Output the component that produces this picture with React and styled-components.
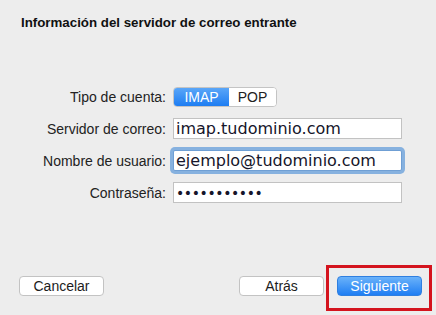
import React from 'react';
import styled, { createGlobalStyle } from 'styled-components';

const GlobalStyle = createGlobalStyle`
  html, body {
    margin: 0;
    padding: 0;
    background: #ededed;
  }
  body {
    font-family: "Liberation Sans", Arial, sans-serif;
    color: #1c1c1c;
  }
`;

const Window = styled('div')`
  width: 436px;
  height: 315px;
  background: #ededed;
  display: flex;
  flex-direction: column;
  box-sizing: border-box;
  padding: 16px 0 0 0;
`;

const Title = styled('div')`
  font-size: 13.3px;
  font-weight: bold;
  color: #111;
  padding-left: 21px;
  line-height: 14px;
`;

const Form = styled('div')`
  margin-top: 57px;
  display: grid;
  grid-template-columns: 166px 229px;
  column-gap: 7px;
  row-gap: 11px;
  align-items: center;
`;

const Label = styled('label')`
  text-align: right;
  font-size: 14px;
  color: #222;
`;

const Segmented = styled('div')`
  display: flex;
  width: 104px;
  height: 20px;
  border-radius: 4px;
  overflow: hidden;
  border: 1px solid #c4c4c4;
  box-sizing: border-box;
  background: #fff;
`;

const Segment = styled('div')`
  flex: ${(p) => (p.$active ? '0 0 55px' : '1')};
  display: flex;
  align-items: center;
  justify-content: center;
  font-size: 14px;
  color: ${(p) => (p.$active ? '#fff' : '#222')};
  background: ${(p) => (p.$active ? 'linear-gradient(#5aa6f8, #1e7df2)' : '#fff')};
`;

const Input = styled('div')`
  height: 21px;
  box-sizing: border-box;
  background: #fff;
  border: 1px solid #c2c2c2;
  padding-left: 2px;
  display: flex;
  align-items: center;
  font-family: "DejaVu Sans", "Liberation Sans", sans-serif;
  font-size: ${(p) => (p.$secret ? '14px' : '16px')};
  color: #15152a;
  letter-spacing: ${(p) => (p.$secret ? '-0.4px' : '0')};
  box-shadow: ${(p) => (p.$focused ? '0 0 0 3px #86b1df' : 'none')};
  border-color: ${(p) => (p.$focused ? '#6f9fd4' : '#c2c2c2')};
  border-radius: ${(p) => (p.$focused ? '2px' : '0')};
`;

const Footer = styled('div')`
  margin-top: auto;
  display: flex;
  align-items: flex-start;
  padding: 0 4px 4px 19px;
`;

const Button = styled('div')`
  width: 85px;
  height: 20px;
  box-sizing: border-box;
  border-radius: 4px;
  display: flex;
  align-items: center;
  justify-content: center;
  font-size: 14px;
  color: ${(p) => (p.$primary ? '#fff' : '#1c1c1c')};
  background: ${(p) => (p.$primary ? 'linear-gradient(#6ab2fa, #1f7ef3)' : '#fff')};
  border: 1px solid ${(p) => (p.$primary ? '#2f7fe0' : '#c3c3c3')};
  margin-top: 11px;
`;

const Spacer = styled('div')`
  flex: 1;
`;

const Highlight = styled('div')`
  border: 3px solid #d4141e;
  padding: 8px 7px 12px 8px;
  margin-left: 2px;
`;

const HighlightInner = styled(Button)`
  margin-top: 0;
`;

export default function App() {
  return (
    <Window>
      <GlobalStyle />
      <Title>Información del servidor de correo entrante</Title>
      <Form>
        <Label>Tipo de cuenta:</Label>
        <Segmented>
          <Segment $active>IMAP</Segment>
          <Segment>POP</Segment>
        </Segmented>
        <Label>Servidor de correo:</Label>
        <Input>imap.tudominio.com</Input>
        <Label>Nombre de usuario:</Label>
        <Input $focused>ejemplo@tudominio.com</Input>
        <Label>Contraseña:</Label>
        <Input $secret>•••••••••••</Input>
      </Form>
      <Footer>
        <Button>Cancelar</Button>
        <Spacer />
        <Button>Atrás</Button>
        <Highlight>
          <HighlightInner $primary>Siguiente</HighlightInner>
        </Highlight>
      </Footer>
    </Window>
  );
}
